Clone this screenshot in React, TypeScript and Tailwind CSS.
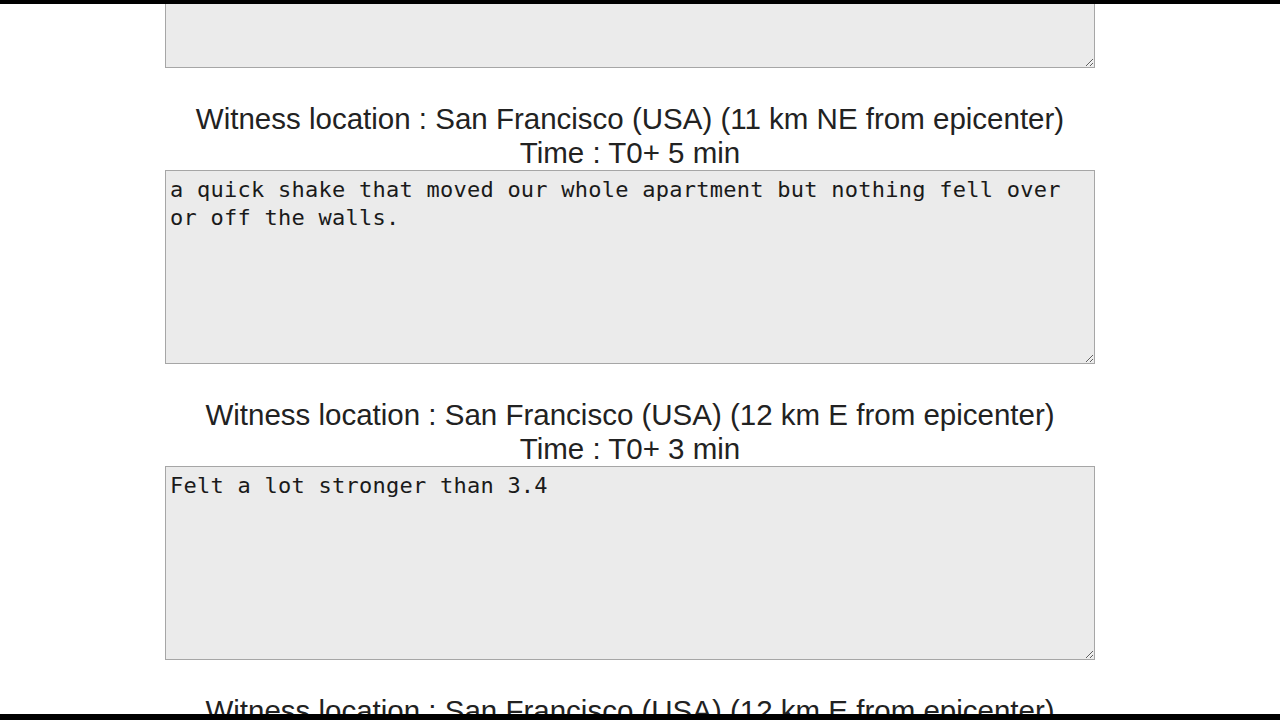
import React from "react";

const entries = [
  { loc: "", time: "", text: "", hideHeading: true },
  {
    loc: "Witness location : San Francisco (USA) (11 km NE from epicenter)",
    time: "Time : T0+ 5 min",
    text: "a quick shake that moved our whole apartment but nothing fell over or off the walls.",
  },
  {
    loc: "Witness location : San Francisco (USA) (12 km E from epicenter)",
    time: "Time : T0+ 3 min",
    text: "Felt a lot stronger than 3.4",
  },
  {
    loc: "Witness location : San Francisco (USA) (12 km E from epicenter)",
    time: "Time : T0+ 2 min",
    text: "",
  },
];

export default function App() {
  return (
    <div className="w-[1280px] h-[720px] flex flex-col bg-white overflow-hidden">
      <div className="h-[4px] bg-black shrink-0" />
      <div className="flex-1 overflow-hidden">
        <div className="-mt-[130px] ml-[165px] w-[930px] flex flex-col gap-[34px]">
          {entries.map((e, i) => (
            <div key={i} className="flex flex-col">
              {!e.hideHeading && (
                <div
                  className="text-center text-[29.5px] leading-[34px] text-[#222]"
                  style={{ fontFamily: '"Liberation Sans", Arial, sans-serif' }}
                >
                  <div>{e.loc}</div>
                  <div>{e.time}</div>
                </div>
              )}
              <textarea
                readOnly
                defaultValue={e.text}
                className="h-[194px] w-[930px] bg-[#ebebeb] border border-[#a6a6a6] px-[4px] pt-[5px] text-[22px] leading-[28px] tracking-[0.25px] text-[#1a1a1a] outline-none"
                style={{ fontFamily: '"DejaVu Sans Mono", monospace' }}
              />
            </div>
          ))}
        </div>
      </div>
      <div className="h-[6px] bg-black shrink-0" />
    </div>
  );
}
